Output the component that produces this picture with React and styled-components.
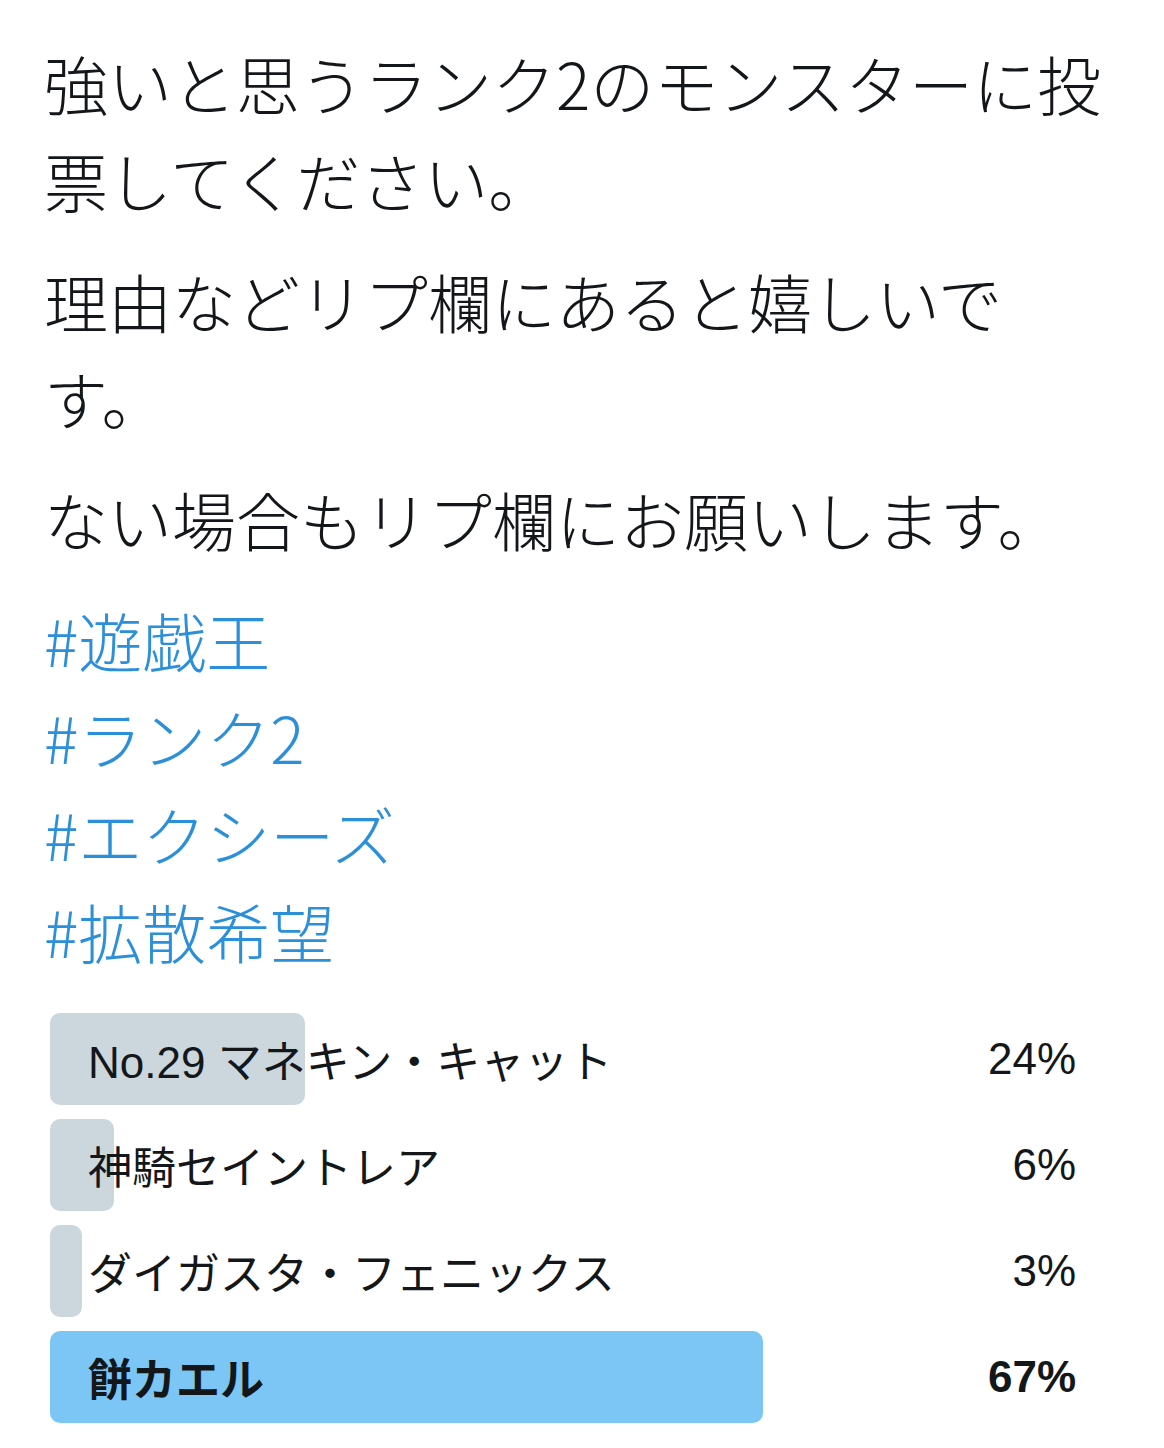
import React from "react";
import styled, { createGlobalStyle } from "styled-components";

const Global = createGlobalStyle`
  html, body {
    margin: 0;
    padding: 0;
    background: #ffffff;
  }
  body {
    font-family: "Noto Sans CJK JP", "Liberation Sans", sans-serif;
    color: #14171a;
    -webkit-font-smoothing: antialiased;
  }
`;

const Tweet = styled.article`
  display: flex;
  flex-direction: column;
  padding: 34px 0 24px 44px;
`;

const Body = styled.div`
  width: 1070px;
  font-size: 64px;
  font-weight: 300;
  line-height: 97px;
  line-break: strict;
`;

const Paragraph = styled.p`
  margin: 0 0 24px;
`;

const Tags = styled.div`
  display: flex;
  flex-direction: column;
  margin-top: 2px;
`;

const Hashtag = styled.a`
  color: #2b8fd9;
  text-decoration: none;
`;

const Poll = styled.ul`
  list-style: none;
  margin: 34px 0 0 6px;
  padding: 0;
  width: 1064px;
  display: flex;
  flex-direction: column;
  gap: 14px;
`;

const Choice = styled.li`
  display: grid;
  height: 92px;
  font-family: "Liberation Sans", "Noto Sans CJK JP", sans-serif;
  font-size: 44px;
  font-weight: ${(p) => (p.$winner ? 700 : 400)};
  color: #14171a;
`;

const Bar = styled.div`
  grid-area: 1 / 1;
  align-self: stretch;
  justify-self: start;
  min-width: 30px;
  border-radius: 10px;
  background: ${(p) => (p.$winner ? "#7cc6f5" : "#ccd6dd")};
`;

const ChoiceContent = styled.div`
  grid-area: 1 / 1;
  display: flex;
  align-items: center;
  justify-content: space-between;
  padding: 0 38px;
  z-index: 1;
`;

const Label = styled.span`
  font-weight: inherit;
`;

const Percent = styled.span`
  font-weight: inherit;
`;

const choices = [
  { label: "No.29 マネキン・キャット", pct: 24 },
  { label: "神騎セイントレア", pct: 6 },
  { label: "ダイガスタ・フェニックス", pct: 3 },
  { label: "餅カエル", pct: 67, winner: true },
];

const tags = ["#遊戯王", "#ランク2", "#エクシーズ", "#拡散希望"];

export default function App() {
  return (
    <>
      <Global />
      <Tweet>
        <Body>
          <Paragraph>強いと思うランク2のモンスターに投票してください。</Paragraph>
          <Paragraph>理由などリプ欄にあると嬉しいです。</Paragraph>
          <Paragraph>ない場合もリプ欄にお願いします。</Paragraph>
          <Tags>
            {tags.map((t) => (
              <Hashtag key={t} href="#">
                {t}
              </Hashtag>
            ))}
          </Tags>
        </Body>
        <Poll>
          {choices.map((c) => (
            <Choice key={c.label} $winner={c.winner}>
              <Bar $winner={c.winner} style={{ width: `${c.pct}%` }} />
              <ChoiceContent>
                <Label>{c.label}</Label>
                <Percent>{c.pct}%</Percent>
              </ChoiceContent>
            </Choice>
          ))}
        </Poll>
      </Tweet>
    </>
  );
}
